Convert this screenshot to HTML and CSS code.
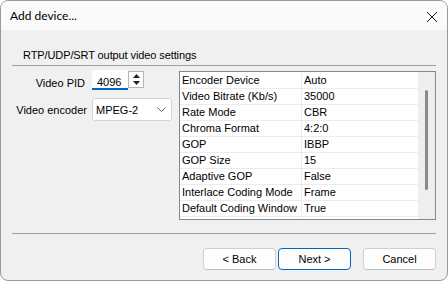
FILE: index.html
```html
<!DOCTYPE html>
<html lang="en">

<head>
    <meta charset="UTF-8">
    <title>Add device...</title>
    <link rel="stylesheet" href="styles.css">
</head>

<body>
    <div class="window">
        <div class="titlebar">
            <span class="title">Add device...</span>
            <svg class="close" width="12" height="12" viewBox="0 0 12 12">
                <path d="M1 1 L11 11 M11 1 L1 11" stroke="#1a1a1a" stroke-width="1" fill="none"/>
            </svg>
        </div>

        <div class="content">
            <div class="group-title">RTP/UDP/SRT output video settings</div>

            <div class="main">
                <div class="fields">
                    <div class="field pid">
                        <label class="field-label">Video PID</label>
                        <div class="textbox">4096</div>
                        <div class="spin">
                            <div class="spin-btn">
                                <svg width="7" height="4" viewBox="0 0 7 4"><path d="M3.5 0 L7 4 L0 4 Z" fill="#222"/></svg>
                            </div>
                            <div class="spin-btn">
                                <svg width="7" height="4" viewBox="0 0 7 4"><path d="M0 0 L7 0 L3.5 4 Z" fill="#222"/></svg>
                            </div>
                        </div>
                    </div>
                    <div class="field">
                        <label class="field-label">Video encoder</label>
                        <div class="select">
                            <span>MPEG-2</span>
                            <svg width="9" height="5" viewBox="0 0 9 5"><path d="M0.5 0.5 L4.5 4.5 L8.5 0.5" stroke="#606060" stroke-width="1" fill="none"/></svg>
                        </div>
                    </div>
                </div>

                <div class="props">
                    <div class="props-rows">
                        <div class="row"><div class="name">Encoder Device</div><div class="value">Auto</div></div>
                        <div class="row"><div class="name">Video Bitrate (Kb/s)</div><div class="value">35000</div></div>
                        <div class="row"><div class="name">Rate Mode</div><div class="value">CBR</div></div>
                        <div class="row"><div class="name">Chroma Format</div><div class="value">4:2:0</div></div>
                        <div class="row"><div class="name">GOP</div><div class="value">IBBP</div></div>
                        <div class="row"><div class="name">GOP Size</div><div class="value">15</div></div>
                        <div class="row"><div class="name">Adaptive GOP</div><div class="value">False</div></div>
                        <div class="row"><div class="name">Interlace Coding Mode</div><div class="value">Frame</div></div>
                        <div class="row"><div class="name">Default Coding Window</div><div class="value">True</div></div>
                        <div class="row last"><div class="name"></div><div class="value"></div></div>
                    </div>
                    <div class="scrollbar">
                        <div class="thumb"></div>
                    </div>
                </div>
            </div>

            <div class="separator"></div>

            <div class="buttons">
                <button class="btn">&lt; Back</button>
                <button class="btn default">Next &gt;</button>
                <button class="btn cancel">Cancel</button>
            </div>
        </div>
    </div>
</body>

</html>
```

FILE: styles.css
```css
* {
    margin: 0;
    padding: 0;
    box-sizing: border-box;
}

body {
    font-family: "Liberation Sans", Arial, sans-serif;
    font-size: 11px;
    color: #000;
    background: #fff;
}

.window {
    width: 448px;
    height: 281px;
    border: 1px solid #9a9a9a;
    border-radius: 8px;
    background-color: #f0f0f0;
    overflow: hidden;
}

.titlebar {
    height: 29px;
    background-color: #fafafa;
    display: flex;
    align-items: center;
    justify-content: space-between;
    padding: 1px 9px 0 9px;
}

.title {
    font-family: Lato, "Liberation Sans", sans-serif;
    font-size: 12px;
    line-height: 16px;
}

.close {
    display: block;
    margin-top: 1px;
}

.content {
    padding: 0 11px;
}

.group-title {
    margin-top: 17px;
    padding-left: 11px;
    line-height: 16px;
    padding-bottom: 2px;
    border-bottom: 1px solid #a0a0a0;
    letter-spacing: -0.1px;
}

.main {
    display: flex;
    margin-top: 4px;
}

/* 左侧字段 */
.fields {
    width: 167px;
}

.field {
    display: flex;
    align-items: center;
}

.field + .field {
    margin-top: 8px;
}

.field-label {
    width: 75px;
    text-align: right;
    margin-right: 5px;
    white-space: nowrap;
}

.pid .field-label {
    padding-right: 2px;
    padding-top: 5px;
}

.textbox {
    width: 36px;
    height: 20px;
    background-color: #fff;
    border-bottom: 2px solid #0067c0;
    padding: 4px 0 0 5px;
    line-height: 16px;
}

.spin {
    width: 16px;
    height: 17px;
    align-self: flex-start;
    margin-top: 1px;
    border: 1px solid #b4b4b4;
    background-color: #fdfdfd;
    display: flex;
    flex-direction: column;
}

.spin-btn {
    flex: 1;
    display: flex;
    align-items: center;
    justify-content: center;
}

.spin-btn svg {
    display: block;
}

.select {
    width: 80px;
    height: 23px;
    background-color: #fff;
    border: 1px solid #d4d4d4;
    border-radius: 3px;
    display: flex;
    align-items: center;
    justify-content: space-between;
    padding: 0 5px 0 3px;
}

.select svg {
    display: block;
}

/* 属性表格 */
.props {
    width: 257px;
    height: 149px;
    margin-top: 1px;
    border: 1px solid #828790;
    display: flex;
}

.props-rows {
    width: 238px;
    background-color: #fff;
    padding-top: 1px;
    overflow: hidden;
}

.row {
    display: flex;
    height: 16px;
    border-bottom: 1px solid #ececec;
    line-height: 15px;
}

.row.last {
    border-bottom: none;
}

.name {
    width: 122px;
    padding-left: 2px;
    border-right: 1px solid #ececec;
    white-space: nowrap;
    overflow: hidden;
}

.value {
    flex: 1;
    padding-left: 2px;
    white-space: nowrap;
}

.scrollbar {
    flex: 1;
    background-color: #eeeeee;
    position: relative;
}

.thumb {
    position: absolute;
    left: 7px;
    top: 18px;
    width: 3px;
    height: 100px;
    border-radius: 2px;
    background-color: #8a8a8a;
}

.separator {
    margin-top: 13px;
    border-top: 1px solid #a0a0a0;
}

.buttons {
    display: flex;
    justify-content: flex-end;
    margin-top: 14px;
}

.btn {
    width: 73px;
    height: 22px;
    font-family: "Liberation Sans", Arial, sans-serif;
    font-size: 11px;
    color: #000;
    background-color: #fdfdfd;
    border: 1px solid #d0d0d0;
    border-bottom-color: #bcbcbc;
    border-radius: 4px;
}

.btn + .btn {
    margin-left: 2px;
}

.btn.default {
    border: 1px solid #0067c0;
}

.btn.cancel {
    margin-left: 12px;
}
```
